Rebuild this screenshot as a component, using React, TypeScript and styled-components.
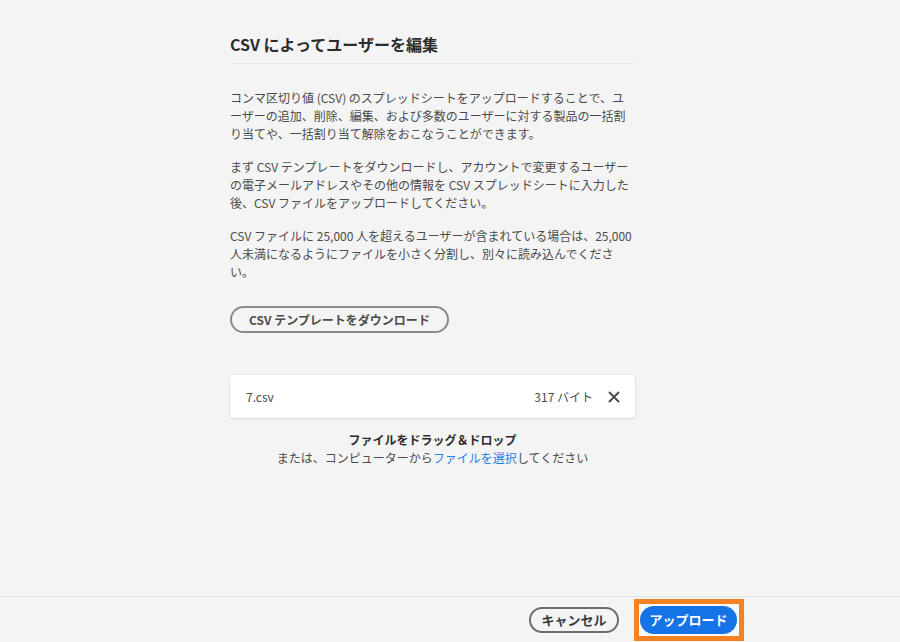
import React from "react";
import styled, { createGlobalStyle } from "styled-components";

const Global = createGlobalStyle`
  html, body { margin: 0; padding: 0; background: #f4f4f4; }
  body { font-family: "Noto Sans CJK JP", "Noto Sans", sans-serif; color: #4b4b4b; }
  * { box-sizing: border-box; }
`;

const Page = styled.div`
  height: 100vh;
  display: flex;
  flex-direction: column;
  background: #f4f4f4;
`;

const Content = styled.main`
  flex: 1;
  padding: 32px 0 0 230px;
`;

const Column = styled.div`
  width: 405px;
  display: flex;
  flex-direction: column;
`;

const Title = styled.h1`
  margin: 0;
  font-size: 16px;
  line-height: 24px;
  font-weight: 700;
  color: #2c2c2c;
  padding-bottom: 7px;
  border-bottom: 1px solid #e6e6e6;
`;

const Body = styled.div`
  margin-top: 25px;
  display: flex;
  flex-direction: column;
  gap: 15px;
`;

const Para = styled.p`
  margin: 0;
  font-size: 12px;
  line-height: 18px;
  color: #4b4b4b;
`;

const OutlineButton = styled.button<{ $size?: number }>`
  align-self: flex-start;
  height: 27px;
  padding: 0;
  border: 2px solid #8a8a8a;
  border-radius: 14px;
  background: transparent;
  font-family: inherit;
  font-size: ${(p) => p.$size ?? 12}px;
  font-weight: 700;
  color: #4b4b4b;
  line-height: 1;
  white-space: nowrap;
  display: inline-flex;
  align-items: center;
  justify-content: center;
`;

const DownloadButton = styled(OutlineButton)`
  margin-top: 25px;
  width: 219px;
`;

const FileRow = styled.div`
  margin-top: 42px;
  height: 43px;
  background: #ffffff;
  border-radius: 3px;
  box-shadow: 0 1px 2px rgba(0, 0, 0, 0.08), 0 0 0 1px rgba(0, 0, 0, 0.03);
  display: flex;
  align-items: center;
  padding: 0 15px 0 16px;
  font-size: 12px;
  color: #4b4b4b;
`;

const FileName = styled.span`
  flex: 1;
`;

const FileSize = styled.span`
  margin-right: 15px;
`;

const RemoveIcon = styled.svg`
  width: 12px;
  height: 12px;
  display: block;
`;

const Drop = styled.div`
  margin-top: 13px;
  text-align: center;
  font-size: 12px;
  line-height: 18px;
  color: #4b4b4b;
`;

const DropTitle = styled.div`
  font-weight: 700;
  color: #2c2c2c;
`;

const Link = styled.span`
  color: #2680eb;
`;

const Footer = styled.footer`
  height: 46px;
  border-top: 1px solid #e3e3e3;
  display: flex;
  justify-content: flex-end;
  align-items: center;
  gap: 15px;
  padding-right: 156px;
`;

const CancelButton = styled(OutlineButton)`
  align-self: center;
  width: 90px;
  height: 26px;
  color: #3a3a3a;
  border-color: #6e6e6e;
`;

const Highlight = styled.span`
  display: inline-flex;
  padding: 2px 2px 2px 1px;
  border: 5px solid #f58220;
  background: #f7f7f7;
`;

const PrimaryButton = styled.button`
  width: 97px;
  height: 28px;
  border: none;
  border-radius: 14px;
  background: #1473e6;
  color: #ffffff;
  font-family: inherit;
  font-size: 13px;
  font-weight: 700;
  white-space: nowrap;
  display: inline-flex;
  align-items: center;
  justify-content: center;
`;

export default function App() {
  return (
    <>
      <Global />
      <Page>
        <Content>
          <Column>
            <Title>CSV によってユーザーを編集</Title>
            <Body>
              <Para>
                コンマ区切り値 (CSV) のスプレッドシートをアップロードすることで、ユーザーの追加、削除、編集、および多数のユーザーに対する製品の一括割り当てや、一括割り当て解除をおこなうことができます。
              </Para>
              <Para>
                まず CSV テンプレートをダウンロードし、アカウントで変更するユーザーの電子メールアドレスやその他の情報を CSV スプレッドシートに入力した後、CSV ファイルをアップロードしてください。
              </Para>
              <Para>
                CSV ファイルに 25,000 人を超えるユーザーが含まれている場合は、25,000 人未満になるようにファイルを小さく分割し、別々に読み込んでください。
              </Para>
            </Body>
            <DownloadButton>CSV テンプレートをダウンロード</DownloadButton>
            <FileRow>
              <FileName>7.csv</FileName>
              <FileSize>317 バイト</FileSize>
              <RemoveIcon viewBox="0 0 12 12">
                <path d="M1.5 1.5 L10.5 10.5 M10.5 1.5 L1.5 10.5" stroke="#4b4b4b" strokeWidth="2" strokeLinecap="round" />
              </RemoveIcon>
            </FileRow>
            <Drop>
              <DropTitle>ファイルをドラッグ＆ドロップ</DropTitle>
              <div>
                または、コンピューターから<Link>ファイルを選択</Link>してください
              </div>
            </Drop>
          </Column>
        </Content>
        <Footer>
          <CancelButton $size={13}>キャンセル</CancelButton>
          <Highlight>
            <PrimaryButton>アップロード</PrimaryButton>
          </Highlight>
        </Footer>
      </Page>
    </>
  );
}
